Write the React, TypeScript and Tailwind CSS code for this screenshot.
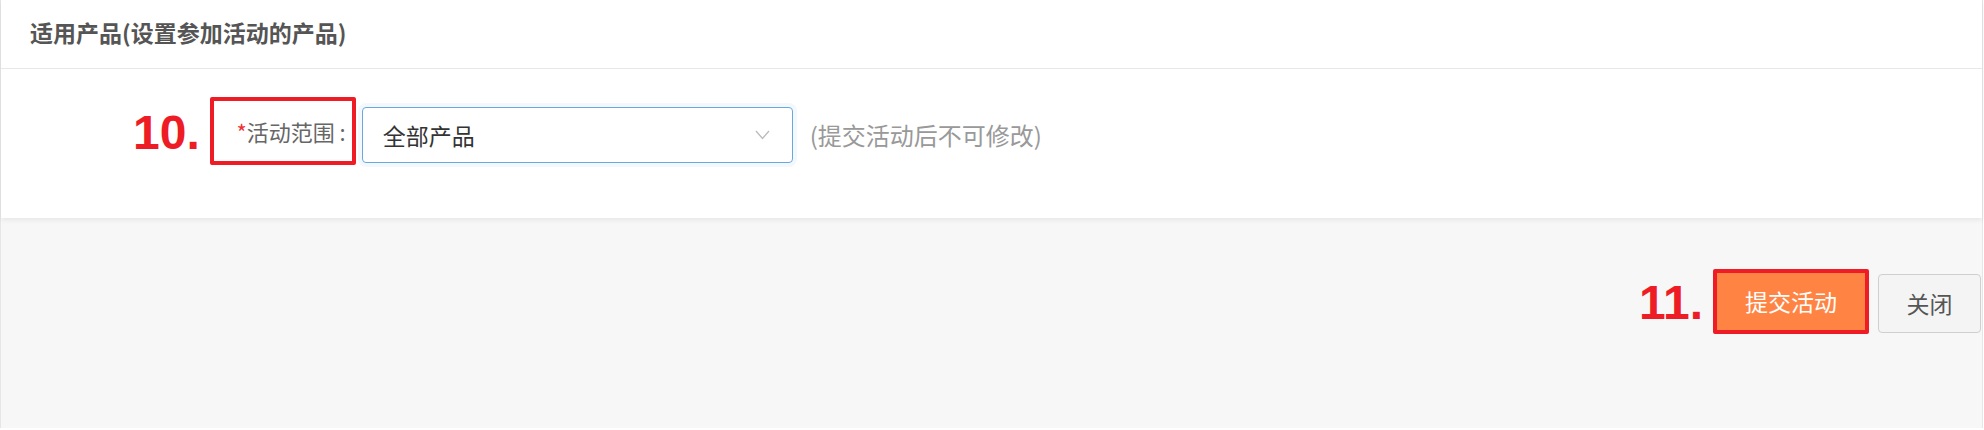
import React from "react";

const cjk = { fontFamily: '"Noto Sans CJK SC", "Noto Sans", sans-serif' };
const num = { fontFamily: '"Liberation Sans", Arial, sans-serif' };

export default function App() {
  return (
    <div className="w-[1984px] h-[430px] bg-white overflow-hidden" style={cjk}>
      <div className="w-[1983px] h-[428px] border-l border-r border-[#e6e6e6] bg-[#f7f7f7] flex flex-col">
        {/* Panel */}
        <div className="bg-white h-[218px] shadow-[0_2px_5px_rgba(0,0,0,0.07)] flex flex-col">
          <div className="h-[69px] border-b border-[#e8e8e8] flex items-center pl-[29px] pb-[4px]">
            <span className="text-[23px] font-bold text-[#555]">适用产品(设置参加活动的产品)</span>
          </div>
          <div className="flex items-center pl-[132px] pt-[28px]">
            <span className="text-[48px] font-bold text-[#ee1c25] leading-none mt-[-4px]" style={num}>
              10.
            </span>
            <div className="ml-[10px] w-[146px] h-[68px] border-[4px] border-[#ee1c25] rounded-[2px] flex items-center justify-end pr-[6px] mb-[8px]">
              <span className="text-[22px] text-[#666]">
                <span className="text-[#e33]">*</span>活动范围 :
              </span>
            </div>
            <div className="ml-[6px] w-[431px] h-[56px] border border-[#6aa7dd] rounded-[4px] shadow-[0_0_0_4px_rgba(102,170,230,0.08)] flex items-center justify-between pl-[20px] pr-[22px]">
              <span className="text-[23px] text-[#333]">全部产品</span>
              <svg width="15" height="10" viewBox="0 0 15 10" fill="none">
                <path d="M1 1 L7.5 8.5 L14 1" stroke="#bbbbbb" strokeWidth="1.3" />
              </svg>
            </div>
            <span className="ml-[17px] text-[24px] text-[#999]">(提交活动后不可修改)</span>
          </div>
        </div>
        {/* Footer */}
        <div className="flex items-center justify-end pr-[1px] pt-[51px]">
          <span className="text-[48px] font-bold text-[#ee1c25] leading-none mr-[10px] mt-[2px]" style={num}>
            11.
          </span>
          <div className="w-[156px] h-[65px] border-[4px] border-[#ee1c25] rounded-[2px] bg-[#ff8444] flex items-center justify-center">
            <span className="text-[23px] text-white">提交活动</span>
          </div>
          <div className="ml-[9px] w-[103px] h-[59px] border border-[#cfcfcf] rounded-[4px] bg-[#f4f4f4] flex items-center justify-center mt-[4px]">
            <span className="text-[23px] text-[#555]">关闭</span>
          </div>
        </div>
      </div>
    </div>
  );
}
